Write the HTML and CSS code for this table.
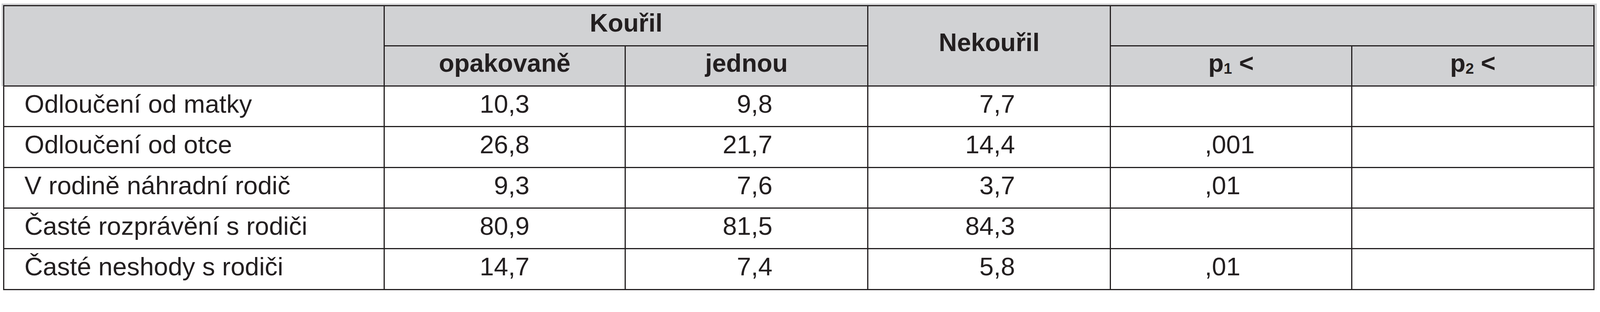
FILE: index.html
```html
<!DOCTYPE html>
<html lang="cs">
<head>
<meta charset="utf-8">
<title>Tabulka</title>
<link rel="stylesheet" href="styles.css">
</head>
<body>
<div class="sheet">
<table class="grid">
  <colgroup>
    <col class="c-label">
    <col class="c-a">
    <col class="c-b">
    <col class="c-c">
    <col class="c-d">
    <col class="c-e">
  </colgroup>
  <thead>
    <tr class="hrow">
      <th rowspan="2"></th>
      <th colspan="2">Kouřil</th>
      <th rowspan="2" class="tall">Nekouřil</th>
      <th colspan="2"></th>
    </tr>
    <tr class="hrow">
      <th>opakovaně</th>
      <th>jednou</th>
      <th>p<span class="sub">1</span> &lt;</th>
      <th>p<span class="sub">2</span> &lt;</th>
    </tr>
  </thead>
  <tbody>
    <tr class="brow">
      <td class="label">Odloučení od matky</td>
      <td class="num">10,3</td>
      <td class="num">9,8</td>
      <td class="num">7,7</td>
      <td class="p"></td>
      <td class="p"></td>
    </tr>
    <tr class="brow">
      <td class="label">Odloučení od otce</td>
      <td class="num">26,8</td>
      <td class="num">21,7</td>
      <td class="num">14,4</td>
      <td class="p">,001</td>
      <td class="p"></td>
    </tr>
    <tr class="brow">
      <td class="label">V rodině náhradní rodič</td>
      <td class="num">9,3</td>
      <td class="num">7,6</td>
      <td class="num">3,7</td>
      <td class="p">,01</td>
      <td class="p"></td>
    </tr>
    <tr class="brow">
      <td class="label">Časté rozprávění s rodiči</td>
      <td class="num">80,9</td>
      <td class="num">81,5</td>
      <td class="num">84,3</td>
      <td class="p"></td>
      <td class="p"></td>
    </tr>
    <tr class="brow">
      <td class="label">Časté neshody s rodiči</td>
      <td class="num">14,7</td>
      <td class="num">7,4</td>
      <td class="num">5,8</td>
      <td class="p">,01</td>
      <td class="p"></td>
    </tr>
  </tbody>
</table>
</div>
</body>
</html>
```

FILE: styles.css
```css
html, body {
  margin: 0;
  padding: 0;
  background: #ffffff;
}

body {
  font-family: "Liberation Sans", Arial, Helvetica, sans-serif;
  color: #231f20;
}

.sheet {
  margin: 8.5px 0 0 3.8px;
  padding: 4.7px 0 0 4.7px;
  width: 4080px;
  background: linear-gradient(#d1d2d4, #d1d2d4) no-repeat 0 0 / 100% 212px;
}

.grid {
  border-collapse: collapse;
  table-layout: fixed;
  width: 4074px;
  font-size: 65.5px;
  line-height: 64.5px;
}

.c-label { width: 973.8px; }
.c-a { width: 616.1px; }
.c-b { width: 621.8px; }
.c-c { width: 620.9px; }
.c-d { width: 617.1px; }
.c-e { width: 620.9px; }

.grid th,
.grid td {
  border: 3.8px solid #231f20;
  padding: 0;
}

.grid th {
  background: #d1d2d4;
  font-weight: bold;
  font-size: 64.5px;
  text-align: center;
  vertical-align: middle;
  padding-bottom: 13px;
}

.grid th.tall {
  padding-bottom: 17px;
}

.hrow {
  height: 102.8px;
}

.brow {
  height: 104.4px;
}

.grid td {
  background: #ffffff;
  vertical-align: top;
  padding-top: 13px;
  white-space: nowrap;
}

.grid td.label {
  text-align: left;
  padding-left: 51px;
}

.grid td.num {
  text-align: right;
  padding-right: 243px;
}

.grid td.p {
  text-align: left;
  padding-left: 240px;
}

.sub {
  font-size: 0.6em;
  line-height: 0;
  vertical-align: -0.12em;
}
```
